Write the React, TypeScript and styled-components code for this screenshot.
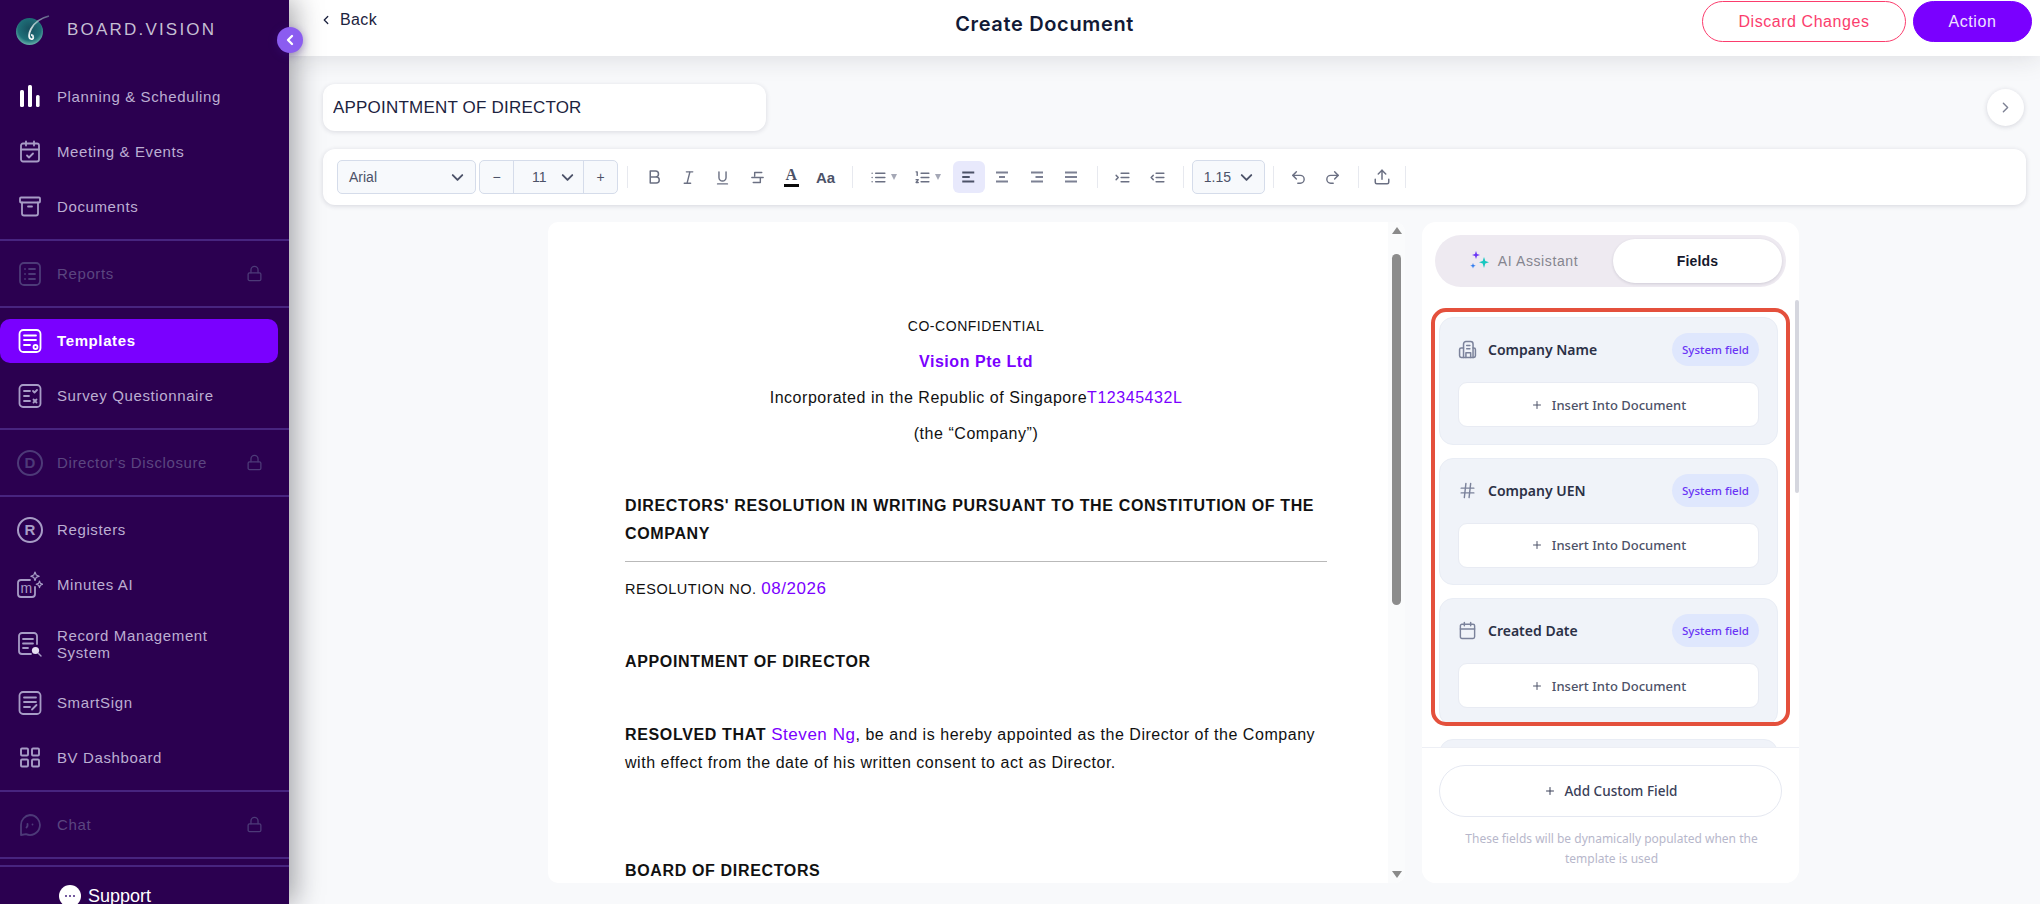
import type { ReactNode } from 'react';
import styled, { createGlobalStyle } from 'styled-components';
import {
  Archive,
  Calendar,
  CalendarCheck,
  ChevronDown,
  ChevronLeft,
  ChevronRight,
  Hash,
  LayoutGrid,
  Lock,
  Plus,
  Redo2,
  Undo2,
  Upload,
} from 'lucide-react';

const GlobalStyle = createGlobalStyle`
  html, body {
    margin: 0;
    padding: 0;
    height: 100%;
    overflow: hidden;
    background: #f8f9fb;
    font-family: "Liberation Sans", Arial, sans-serif;
  }
  * { box-sizing: border-box; }
`;

const Shell = styled.div`
  display: flex;
  width: 100%;
  height: 100vh;
  overflow: hidden;
`;

/* sidebar */
const Sidebar = styled.aside`
  position: relative;
  z-index: 3;
  flex: 0 0 289px;
  height: 904px;
  background: #2b0050;
  box-shadow: 6px 0 26px rgba(20, 20, 30, 0.38);
  display: flex;
  flex-direction: column;
`;

const Brand = styled.div`
  height: 64px;
  flex: 0 0 64px;
  display: flex;
  align-items: flex-start;
  gap: 15px;
  padding: 13px 0 0 16px;
`;

const BrandName = styled.span`
  margin-top: 7px;
  font-size: 17px;
  letter-spacing: 2.2px;
  color: #c5bfd3;
`;

const CollapseButton = styled.button`
  position: absolute;
  top: 27px;
  left: 277px;
  width: 26px;
  height: 26px;
  padding: 0;
  border: 0;
  border-radius: 50%;
  background: #8b5cf0;
  color: #fff;
  display: flex;
  align-items: center;
  justify-content: center;
  box-shadow: 0 2px 8px rgba(60, 20, 140, 0.4);
`;

const NavSection = styled.nav`
  display: flex;
  flex-direction: column;
  flex: none;
  border-bottom: 2px solid #47247f;
  padding: 5px 0;
`;

const NavItem = styled.div<{ $active?: boolean; $locked?: boolean; $tall?: boolean }>`
  display: flex;
  align-items: center;
  min-height: ${(p) => (p.$tall ? 52 : 44)}px;
  margin: 5.5px 11px 5.5px 0;
  padding-left: 18px;
  padding-right: 15px;
  border-radius: 10px;
  background: ${(p) => (p.$active ? '#7a00ff' : 'transparent')};
  color: ${(p) => (p.$active ? '#fff' : p.$locked ? '#5b4680' : '#bcaed2')};
  font-size: 15px;
  font-weight: ${(p) => (p.$active ? 700 : 400)};
  line-height: 17px;
`;

const NavIcon = styled.span<{ $active?: boolean; $locked?: boolean }>`
  flex: 0 0 24px;
  width: 24px;
  height: 24px;
  margin-right: 15px;
  display: flex;
  align-items: center;
  justify-content: center;
  color: ${(p) => (p.$active ? '#fff' : p.$locked ? '#4d3a78' : '#a79cc6')};
`;

const NavLabel = styled.span`
  flex: 1;
  max-width: 175px;
  letter-spacing: 0.62px;
`;

const LockMark = styled.span`
  margin-left: auto;
  display: flex;
  color: #4d3a78;
`;

const LetterBadge = styled.span`
  flex: none;
  width: 26px;
  height: 26px;
  border-radius: 50%;
  border: 2px solid currentColor;
  display: flex;
  align-items: center;
  justify-content: center;
  font-size: 15px;
  font-weight: 700;
`;

const SupportRow = styled.div`
  flex: none;
  margin-top: 6px;
  border-top: 2px solid #47247f;
  padding: 18px 0 0 59px;
  display: flex;
  align-items: center;
  gap: 7px;
  color: #fff;
  font-size: 18px;
  line-height: 21px;
`;

const SupportBubble = styled.span`
  width: 22px;
  height: 22px;
  border-radius: 50%;
  background: #fff;
  display: flex;
  align-items: center;
  justify-content: center;
  gap: 1.5px;

  i {
    width: 2.5px;
    height: 2.5px;
    border-radius: 50%;
    background: #47247f;
  }
`;

/* header */
const Main = styled.main`
  flex: 1;
  min-width: 0;
  display: flex;
  flex-direction: column;
`;

const Header = styled.header`
  position: relative;
  z-index: 2;
  height: 56px;
  flex: 0 0 56px;
  background: #fff;
  box-shadow: 0 2px 26px rgba(30, 30, 50, 0.13);
  display: flex;
  justify-content: space-between;
  align-items: flex-start;
  padding: 1px 8px 0 30px;
`;

const BackLink = styled.div`
  display: flex;
  align-items: center;
  gap: 7px;
  height: 38px;
  font-size: 16px;
  letter-spacing: 0.4px;
  color: #1c2340;
`;

const PageTitle = styled.h1`
  margin: 12px 0 0 10px;
  font-family: Inter, "Noto Sans", sans-serif;
  font-size: 20px;
  line-height: 23px;
  font-weight: 600;
  letter-spacing: 0.65px;
  color: #121a36;
`;

const HeaderActions = styled.div`
  display: flex;
  gap: 7px;
`;

const PillButton = styled.button<{ $primary?: boolean }>`
  height: 41px;
  width: ${(p) => (p.$primary ? 119 : 204)}px;
  border-radius: 21px;
  border: 1.5px solid ${(p) => (p.$primary ? '#7a00ff' : '#fb3d6d')};
  background: ${(p) => (p.$primary ? '#7a00ff' : '#fff')};
  color: ${(p) => (p.$primary ? '#efe3ff' : '#fb3d6d')};
  font-family: "Liberation Sans", Arial, sans-serif;
  font-size: 16px;
  letter-spacing: 0.55px;
`;

/* page content */
const Content = styled.div`
  flex: 1;
  min-height: 0;
  padding: 28px 14px 0 34px;
`;

const TitleRow = styled.div`
  display: flex;
  align-items: center;
  justify-content: space-between;
  height: 47px;
`;

const TitleInput = styled.input`
  width: 443px;
  height: 47px;
  padding: 0 10px;
  border: 0;
  outline: 0;
  border-radius: 12px;
  background: #fff;
  box-shadow: 0 1px 5px rgba(30, 30, 60, 0.14);
  color: #1c2340;
  font-family: "Liberation Sans", Arial, sans-serif;
  font-size: 17px;
  letter-spacing: 0.2px;
`;

const RoundToggle = styled.button`
  width: 37px;
  height: 37px;
  padding: 0;
  margin-right: 2px;
  border: 0;
  border-radius: 50%;
  background: #fff;
  color: #7d8194;
  display: flex;
  align-items: center;
  justify-content: center;
  box-shadow: 0 1px 5px rgba(30, 30, 60, 0.16);
`;

const Toolbar = styled.div`
  margin-top: 18px;
  height: 56px;
  width: 1703px;
  background: #fff;
  border-radius: 12px;
  box-shadow: 0 1px 5px rgba(30, 30, 60, 0.16);
  display: flex;
  align-items: center;
  padding-left: 14px;
`;

const SelectBox = styled.div<{ $w: number }>`
  width: ${(p) => p.$w}px;
  height: 34px;
  border: 1px solid #d5dcea;
  border-radius: 5px;
  background: #f7f9fc;
  color: #4c5268;
  font-size: 14px;
  display: flex;
  align-items: center;
  justify-content: space-between;
  padding: 0 8px 0 11px;
`;

const SizeGroup = styled.div`
  margin-left: 3px;
  width: 139px;
  height: 34px;
  border: 1px solid #d5dcea;
  border-radius: 5px;
  background: #f7f9fc;
  color: #4c5268;
  font-size: 14px;
  display: flex;
`;

const SizeStep = styled.span`
  flex: 0 0 33px;
  display: flex;
  align-items: center;
  justify-content: center;
`;

const SizeValue = styled.span`
  flex: 1;
  border-left: 1px solid #d5dcea;
  border-right: 1px solid #d5dcea;
  display: flex;
  align-items: center;
  justify-content: space-between;
  padding: 0 6px 0 18px;
`;

const ToolDivider = styled.span<{ $wide?: boolean }>`
  width: 1px;
  height: 22px;
  margin: 0 ${(p) => (p.$wide ? 9 : 8)}px;
  background: #e7e9ef;
`;

const ToolButton = styled.span<{ $active?: boolean; $w?: number }>`
  width: ${(p) => p.$w ?? 34.3}px;
  margin-left: ${(p) => (p.$active ? 3 : 0)}px;
  height: 32px;
  border-radius: 6px;
  background: ${(p) => (p.$active ? '#e8e9fc' : 'transparent')};
  color: #6b7083;
  display: flex;
  align-items: center;
  justify-content: center;
`;

const ColorA = styled.span`
  font-family: "Liberation Serif", serif;
  font-size: 16px;
  line-height: 14px;
  font-weight: 700;
  color: #4c5268;
  border-bottom: 3px solid #0a0a0a;
  padding: 0 2px 2px;
`;

const CaseAa = styled.span`
  font-size: 15px;
  font-weight: 700;
  color: #4c5268;
`;

const Caret = styled.span`
  width: 0;
  height: 0;
  margin-left: 4px;
  border-left: 3px solid transparent;
  border-right: 3px solid transparent;
  border-top: 6px solid #a5a8b6;
`;

/* document + side panel */
const Workspace = styled.div`
  margin-top: 17px;
  margin-left: 225px;
  display: flex;
  gap: 17px;
  height: 661px;
`;

const Paper = styled.section`
  width: 857px;
  height: 661px;
  background: #fff;
  border-radius: 10px;
  display: flex;
  overflow: hidden;
`;

const DocBody = styled.div`
  flex: 1;
  min-width: 0;
  padding: 90px 61px 0 77px;
  color: #111;
  font-size: 16px;
  line-height: 28px;
  letter-spacing: 0.54px;
`;

const DocLine = styled.p<{ $gap?: number; $center?: boolean; $size?: number }>`
  margin: ${(p) => p.$gap ?? 0}px 0 0;
  text-align: ${(p) => (p.$center ? 'center' : 'left')};
  font-size: ${(p) => (p.$size ? `${p.$size}px` : 'inherit')};
  white-space: nowrap;
`;

const DocHeading = styled(DocLine)`
  font-weight: 700;
  letter-spacing: 0.65px;
  white-space: normal;
`;

const DocRule = styled.hr`
  margin: 13px 0;
  border: 0;
  border-top: 1px solid #b9b9b9;
`;

const Merge = styled.span<{ $bold?: boolean; $big?: boolean }>`
  color: #7a00ff;
  font-weight: ${(p) => (p.$bold ? 700 : 400)};
  font-size: ${(p) => (p.$big ? '17px' : 'inherit')};
`;

const DocBold = styled.b`
  letter-spacing: 0.65px;
`;

const ScrollTrack = styled.div`
  flex: 0 0 17px;
  display: flex;
  flex-direction: column;
  align-items: center;
  background: #fafbfc;
  padding-top: 5px;
`;

const ScrollArrow = styled.span<{ $down?: boolean }>`
  width: 0;
  height: 0;
  border-left: 5px solid transparent;
  border-right: 5px solid transparent;
  border-bottom: ${(p) => (p.$down ? '0' : '7px solid #8a8a8a')};
  border-top: ${(p) => (p.$down ? '7px solid #8a8a8a' : '0')};
  margin-top: ${(p) => (p.$down ? 'auto' : '0')};
  margin-bottom: ${(p) => (p.$down ? '5px' : '0')};
`;

const ScrollThumb = styled.span`
  width: 9px;
  height: 351px;
  margin-top: 20px;
  border-radius: 5px;
  background: #8c8c8c;
`;

const Panel = styled.aside`
  position: relative;
  width: 377px;
  height: 661px;
  background: #fff;
  border-radius: 14px;
  display: flex;
  flex-direction: column;
  overflow: hidden;
`;

const TabBar = styled.div`
  margin: 13px 13px 0;
  height: 52px;
  flex: 0 0 52px;
  border-radius: 26px;
  background: #eeeaf1;
  padding: 4px 4px 4px 0;
  display: flex;
`;

const Tab = styled.div<{ $active?: boolean }>`
  display: flex;
  align-items: center;
  justify-content: center;
  gap: 8px;
  width: ${(p) => (p.$active ? 169 : 178)}px;
  border-radius: 22px;
  font-size: 14px;
  letter-spacing: ${(p) => (p.$active ? 0.2 : 0.6)}px;
  font-weight: ${(p) => (p.$active ? 700 : 400)};
  color: ${(p) => (p.$active ? '#16182c' : '#85858f')};
  background: ${(p) => (p.$active ? '#fff' : 'transparent')};
  box-shadow: ${(p) => (p.$active ? '0 1px 3px rgba(30,30,60,.14)' : 'none')};
`;

const FieldList = styled.div`
  flex: 1;
  min-height: 0;
  overflow: hidden;
  padding: 30px 21px 0 17px;
  display: flex;
  flex-direction: column;
  gap: 13px;
`;

const FieldCard = styled.div`
  flex: 0 0 127.5px;
  border-radius: 14px;
  border: 1px solid #e9edf5;
  background: #f0f3f9;
  padding: 15px 18px 0;
`;

const FieldHead = styled.div`
  display: flex;
  align-items: center;
  height: 33px;
  gap: 11px;
`;

const FieldName = styled.span`
  flex: 1;
  font-family: "Noto Sans", sans-serif;
  font-size: 14px;
  font-weight: 600;
  color: #2b3046;
`;

const FieldIcon = styled.span`
  flex: 0 0 19px;
  display: flex;
  align-items: center;
  justify-content: center;
  color: #7b829b;
`;

const SystemBadge = styled.span`
  width: 87px;
  height: 33px;
  border-radius: 17px;
  background: #dfe7fd;
  color: #6a35f5;
  font-family: "Noto Sans", sans-serif;
  font-size: 11.5px;
  font-weight: 500;
  display: flex;
  align-items: center;
  justify-content: center;
`;

const InsertButton = styled.button`
  width: 301px;
  height: 45px;
  margin-top: 16px;
  border: 1px solid #e8ebf3;
  border-radius: 9px;
  background: #fff;
  color: #4d5268;
  font-family: "Noto Sans", sans-serif;
  font-size: 13px;
  font-weight: 500;
  display: flex;
  align-items: center;
  justify-content: center;
  gap: 9px;
`;

const PanelFooter = styled.div`
  flex: 0 0 136px;
  background: #fff;
  border-top: 1px solid #edeff5;
  padding: 17px 17px 0;
`;

const AddFieldButton = styled.button`
  width: 343px;
  height: 52px;
  border: 1px solid #e5e8f1;
  border-radius: 26px;
  background: #fff;
  color: #3a4058;
  font-family: "Noto Sans", sans-serif;
  font-size: 13.5px;
  font-weight: 500;
  display: flex;
  align-items: center;
  justify-content: center;
  gap: 9px;
`;

const Hint = styled.p`
  margin: 12px 12px 0 14px;
  text-align: center;
  font-family: "Noto Sans", sans-serif;
  font-size: 12px;
  line-height: 19.5px;
  color: #b7b7cb;
`;

const Highlight = styled.div`
  position: absolute;
  left: 9px;
  top: 86px;
  width: 359px;
  height: 418px;
  border: 4px solid #e4503c;
  border-radius: 15px;
  pointer-events: none;
`;

const PanelScroll = styled.span`
  position: absolute;
  right: 0;
  top: 78px;
  width: 4px;
  height: 193px;
  border-radius: 2px;
  background: #d5d6de;
`;

/* drawn icons */
const stroke = {
  fill: 'none',
  stroke: 'currentColor',
  strokeWidth: 1.8,
  strokeLinecap: 'round' as const,
  strokeLinejoin: 'round' as const,
};

function Svg({ size = 24, children }: { size?: number; children: ReactNode }) {
  return (
    <svg width={size} height={size} viewBox="0 0 24 24" {...stroke}>
      {children}
    </svg>
  );
}

const LogoMark = () => (
  <svg width="36" height="34" viewBox="0 0 36 34">
    <defs>
      <radialGradient id="orb" cx="0.5" cy="0.4" r="0.65">
        <stop offset="0" stopColor="#174f5e" />
        <stop offset="0.65" stopColor="#1f6f78" />
        <stop offset="1" stopColor="#7cc4ba" />
      </radialGradient>
      <linearGradient id="plume" x1="1" y1="0" x2="0" y2="1">
        <stop offset="0" stopColor="#8fb8b8" stopOpacity="0.5" />
        <stop offset="1" stopColor="#ffffff" />
      </linearGradient>
    </defs>
    <circle cx="13.5" cy="18.5" r="13.5" fill="url(#orb)" />
    <path d="M33 3 C25 5 18 10 15 16 C13 20 12 25 15 26 C18 27 18 22 15 22" fill="none" stroke="url(#plume)" strokeWidth="1.800" />
  </svg>
);

const BarsIcon = () => (
  <svg width="24" height="24" viewBox="0 0 24 24" fill="#fff">
    <rect x="2" y="5" width="4" height="17" rx="1.6" />
    <rect x="10" y="0" width="4" height="22" rx="1.6" />
    <rect x="18" y="10" width="3.6" height="12" rx="1.6" />
  </svg>
);

const ReportsIcon = () => (
  <Svg>
    <rect x="2" y="1" width="20" height="22" rx="4" />
    <path d="M7 7h.01M7 12h.01M7 17h.01M11 7h6M11 12h6M11 17h6" />
  </Svg>
);

const TemplateIcon = () => (
  <Svg>
    <rect x="1.5" y="1" width="21" height="22" rx="4" />
    <path d="M6 6.5h12M6 11h12M6 16h6" />
    <circle cx="17.5" cy="18" r="2" />
  </Svg>
);

const SurveyIcon = () => (
  <Svg>
    <rect x="1.5" y="1" width="21" height="22" rx="3.5" />
    <path d="M6 7h6M6 12h5M6 17h6M15 7l1.5 1.5L19 6M15.5 15.5l3 3M18.5 15.5l-3 3" />
  </Svg>
);

const MinutesIcon = () => (
  <svg width="26" height="27" viewBox="0 0 26 27" {...stroke} style={{ flex: 'none' }}>
    <path d="M13 9H4a3 3 0 0 0-3 3v11a3 3 0 0 0 3 3h11a3 3 0 0 0 3-3v-7" />
    <text x="3.500" y="22" fontSize="14" fontFamily="Liberation Sans" stroke="none" fill="currentColor">
      m
    </text>
    <path d="M18 1l1.200 3 3 1.200-3 1.200L18 9.500l-1.200-3.100-3-1.200 3-1.200zM22.500 10l.9 2.400 2.400.9-2.400.9-.9 2.400-.9-2.400-2.400-.9 2.400-.9z" strokeWidth={1.2} />
  </svg>
);

const RecordIcon = () => (
  <svg width="26" height="26" viewBox="0 0 26 26" {...stroke} style={{ flex: 'none' }}>
    <path d="M20 13V5a3 3 0 0 0-3-3H5a3 3 0 0 0-3 3v15a3 3 0 0 0 3 3h9" />
    <path d="M6 8h10M6 12.500h10M6 17h5" />
    <circle cx="18.500" cy="19.500" r="3.600" fill="#e6e0f2" stroke="none" />
    <path d="M21.500 22.500l2.500 2.500" strokeWidth={1.4} />
  </svg>
);

const SignIcon = () => (
  <Svg>
    <rect x="1.500" y="1" width="21" height="22" rx="3.500" />
    <path d="M6 6.500h12M6 11h12M6 16h6M14 18.500l4.500-4.500" />
  </Svg>
);

const ChatIcon = () => (
  <Svg>
    <path d="M12 2a10 10 0 1 1-4 19.200L3 22v-10A10 10 0 0 1 12 2z" />
    <path d="M9.500 11v2l-1 1.500M14.500 11.500h.01" />
  </Svg>
);

const AlignGlyph = ({ mode }: { mode: 'left' | 'center' | 'right' | 'justify' }) => {
  const rows = {
    left: 'M3 6h16M3 12h10M3 18h16',
    center: 'M4 6h16M8 12h8M4 18h16',
    right: 'M4 6h16M10 12h10M4 18h16',
    justify: 'M4 6h16M4 12h16M4 18h16',
  };
  return (
    <svg width="18" height="18" viewBox="0 0 24 24" fill="none" stroke={mode === 'left' ? '#4c5268' : '#7d8194'} strokeWidth="2.600">
      <path d={rows[mode]} />
    </svg>
  );
};

const ToolGlyph = ({ d, size = 17 }: { d: string; size?: number }) => (
  <svg width={size} height={size} viewBox="0 0 24 24" fill="none" stroke="currentColor" strokeWidth="2" strokeLinecap="round" strokeLinejoin="round">
    <path d={d} />
  </svg>
);

const SparkleIcon = () => (
  <svg width="20" height="20" viewBox="0 0 20 20">
    <path d="M6 0l1 3 3 1-3 1-1 3-1-3-3-1 3-1z" fill="#6a35f5" />
    <path d="M14 6l1.300 4 3.700 1.300-3.700 1.300L14 17l-1.300-4.400L9 11.300l3.700-1.300z" fill="#18c7c0" />
    <path d="M3 12l.7 2 2 .7-2 .7-.7 2-.7-2-2-.7 2-.7z" fill="#2f7bf0" />
  </svg>
);

const BuildingIcon = () => (
  <svg width="19" height="19" viewBox="0 0 24 24" {...stroke} strokeWidth={1.900}>
    <path d="M7 22V5a3 3 0 0 1 3-3h6a3 3 0 0 1 3 3v17" />
    <path d="M7 10H4a2 2 0 0 0-2 2v8a2 2 0 0 0 2 2h16a2 2 0 0 0 2-2v-8a2 2 0 0 0-2-2h-1" />
    <path d="M11 7h4M11 11h4M10 22v-6h6v6" />
  </svg>
);

type NavEntry = { label: string; icon: ReactNode; active?: boolean; locked?: boolean; tall?: boolean };

const navSections: NavEntry[][] = [
  [
    { label: 'Planning & Scheduling', icon: <BarsIcon /> },
    { label: 'Meeting & Events', icon: <CalendarCheck size={25} strokeWidth={1.800} /> },
    { label: 'Documents', icon: <Archive size={25} strokeWidth={1.800} /> },
  ],
  [{ label: 'Reports', icon: <ReportsIcon />, locked: true }],
  [
    { label: 'Templates', icon: <TemplateIcon />, active: true },
    { label: 'Survey Questionnaire', icon: <SurveyIcon /> },
  ],
  [{ label: "Director's Disclosure", icon: <LetterBadge>D</LetterBadge>, locked: true }],
  [
    { label: 'Registers', icon: <LetterBadge>R</LetterBadge> },
    { label: 'Minutes AI', icon: <MinutesIcon /> },
    { label: 'Record Management System', icon: <RecordIcon />, tall: true },
    { label: 'SmartSign', icon: <SignIcon /> },
    { label: 'BV Dashboard', icon: <LayoutGrid size={25} strokeWidth={1.900} /> },
  ],
  [{ label: 'Chat', icon: <ChatIcon />, locked: true }],
];

const fields = [
  { name: 'Company Name', icon: <BuildingIcon /> },
  { name: 'Company UEN', icon: <Hash size={19} strokeWidth={1.800} /> },
  { name: 'Created Date', icon: <Calendar size={19} strokeWidth={1.800} /> },
];

export default function App() {
  return (
    <>
      <GlobalStyle />
      <Shell>
        <Sidebar>
          <Brand>
            <LogoMark />
            <BrandName>BOARD.VISION</BrandName>
          </Brand>
          <CollapseButton aria-label="Collapse sidebar">
            <ChevronLeft size={16} strokeWidth={3.500} />
          </CollapseButton>
          {navSections.map((section, i) => (
            <NavSection key={i}>
              {section.map((item) => (
                <NavItem key={item.label} $active={item.active} $locked={item.locked} $tall={item.tall}>
                  <NavIcon $active={item.active} $locked={item.locked}>{item.icon}</NavIcon>
                  <NavLabel>{item.label}</NavLabel>
                  {item.locked && (
                    <LockMark>
                      <Lock size={17} strokeWidth={1.800} />
                    </LockMark>
                  )}
                </NavItem>
              ))}
            </NavSection>
          ))}
          <SupportRow>
            <SupportBubble>
              <i />
              <i />
              <i />
            </SupportBubble>
            Support
          </SupportRow>
        </Sidebar>

        <Main>
          <Header>
            <BackLink>
              <ChevronLeft size={14} strokeWidth={2.200} />
              Back
            </BackLink>
            <PageTitle>Create Document</PageTitle>
            <HeaderActions>
              <PillButton>Discard Changes</PillButton>
              <PillButton $primary>Action</PillButton>
            </HeaderActions>
          </Header>

          <Content>
            <TitleRow>
              <TitleInput defaultValue="APPOINTMENT OF DIRECTOR" />
              <RoundToggle aria-label="Expand panel">
                <ChevronRight size={17} />
              </RoundToggle>
            </TitleRow>

            <Toolbar>
              <SelectBox $w={139}>
                Arial
                <ChevronDown size={19} strokeWidth={2.400} />
              </SelectBox>
              <SizeGroup>
                <SizeStep>−</SizeStep>
                <SizeValue>
                  11
                  <ChevronDown size={19} strokeWidth={2.400} />
                </SizeValue>
                <SizeStep>+</SizeStep>
              </SizeGroup>
              <ToolDivider $wide />
              <ToolButton>
                <ToolGlyph d="M7 4h7a4 4 0 0 1 0 8H7zM7 12h8a4 4 0 0 1 0 8H7z" size={18} />
              </ToolButton>
              <ToolButton>
                <ToolGlyph d="M9 4h9M6 20h9M14 4l-4 16" />
              </ToolButton>
              <ToolButton>
                <ToolGlyph d="M7 4v8a5 5 0 0 0 10 0V4M5 21h14" />
              </ToolButton>
              <ToolButton>
                <ToolGlyph d="M18 5H8v5M4 12h16M16 12v7H6" />
              </ToolButton>
              <ToolButton>
                <ColorA>A</ColorA>
              </ToolButton>
              <ToolButton>
                <CaseAa>Aa</CaseAa>
              </ToolButton>
              <ToolDivider $wide />
              <ToolButton $w={44}>
                <ToolGlyph d="M3 6h.01M3 12h.01M3 18h.01M8 6h13M8 12h13M8 18h13" />
                <Caret />
              </ToolButton>
              <ToolButton $w={44}>
                <ToolGlyph d="M3 4h1.500v5M3 15h3l-3 4h3M10 6h11M10 12h11M10 18h11" />
                <Caret />
              </ToolButton>
              <ToolButton $active $w={32}>
                <AlignGlyph mode="left" />
              </ToolButton>
              <ToolButton $w={34.6}>
                <AlignGlyph mode="center" />
              </ToolButton>
              <ToolButton $w={34.6}>
                <AlignGlyph mode="right" />
              </ToolButton>
              <ToolButton $w={34.6}>
                <AlignGlyph mode="justify" />
              </ToolButton>
              <ToolDivider />
              <ToolButton $w={34.6}>
                <ToolGlyph d="M3 9l3 3-3 3M10 6h11M10 12h11M10 18h11" />
              </ToolButton>
              <ToolButton $w={34.6}>
                <ToolGlyph d="M6 9l-3 3 3 3M10 6h11M10 12h11M10 18h11" />
              </ToolButton>
              <ToolDivider />
              <SelectBox $w={73}>
                1.15
                <ChevronDown size={19} strokeWidth={2.400} />
              </SelectBox>
              <ToolDivider />
              <ToolButton $w={34}>
                <Undo2 size={17} />
              </ToolButton>
              <ToolButton $w={34}>
                <Redo2 size={17} />
              </ToolButton>
              <ToolDivider />
              <ToolButton $w={30}>
                <Upload size={18} />
              </ToolButton>
              <ToolDivider />
            </Toolbar>

            <Workspace>
              <Paper>
                <DocBody>
                  <DocLine $center $size={14}>CO-CONFIDENTIAL</DocLine>
                  <DocLine $center $gap={8}>
                    <Merge $bold>Vision Pte Ltd</Merge>
                  </DocLine>
                  <DocLine $center $gap={8}>
                    Incorporated in the Republic of Singapore<Merge>T12345432L</Merge>
                  </DocLine>
                  <DocLine $center $gap={8}>(the “Company”)</DocLine>
                  <DocHeading $gap={44}>DIRECTORS' RESOLUTION IN WRITING PURSUANT TO THE CONSTITUTION OF THE COMPANY</DocHeading>
                  <DocRule />
                  <DocLine $size={14.5}>
                    RESOLUTION NO. <Merge $big>08/2026</Merge>
                  </DocLine>
                  <DocHeading $gap={45}>APPOINTMENT OF DIRECTOR</DocHeading>
                  <DocLine $gap={45}>
                    <DocBold>RESOLVED THAT</DocBold> <Merge $big>Steven Ng</Merge>, be and is hereby appointed as the Director of the Company
                  </DocLine>
                  <DocLine>with effect from the date of his written consent to act as Director.</DocLine>
                  <DocHeading $gap={80}>BOARD OF DIRECTORS</DocHeading>
                </DocBody>
                <ScrollTrack>
                  <ScrollArrow />
                  <ScrollThumb />
                  <ScrollArrow $down />
                </ScrollTrack>
              </Paper>

              <Panel>
                <TabBar>
                  <Tab>
                    <SparkleIcon />
                    AI Assistant
                  </Tab>
                  <Tab $active>Fields</Tab>
                </TabBar>
                <FieldList>
                  {fields.map((field) => (
                    <FieldCard key={field.name}>
                      <FieldHead>
                        <FieldIcon>{field.icon}</FieldIcon>
                        <FieldName>{field.name}</FieldName>
                        <SystemBadge>System field</SystemBadge>
                      </FieldHead>
                      <InsertButton>
                        <Plus size={12} />
                        Insert Into Document
                      </InsertButton>
                    </FieldCard>
                  ))}
                  <FieldCard />
                </FieldList>
                <PanelFooter>
                  <AddFieldButton>
                    <Plus size={12} />
                    Add Custom Field
                  </AddFieldButton>
                  <Hint>These fields will be dynamically populated when the template is used</Hint>
                </PanelFooter>
                <Highlight />
                <PanelScroll />
              </Panel>
            </Workspace>
          </Content>
        </Main>
      </Shell>
    </>
  );
}
